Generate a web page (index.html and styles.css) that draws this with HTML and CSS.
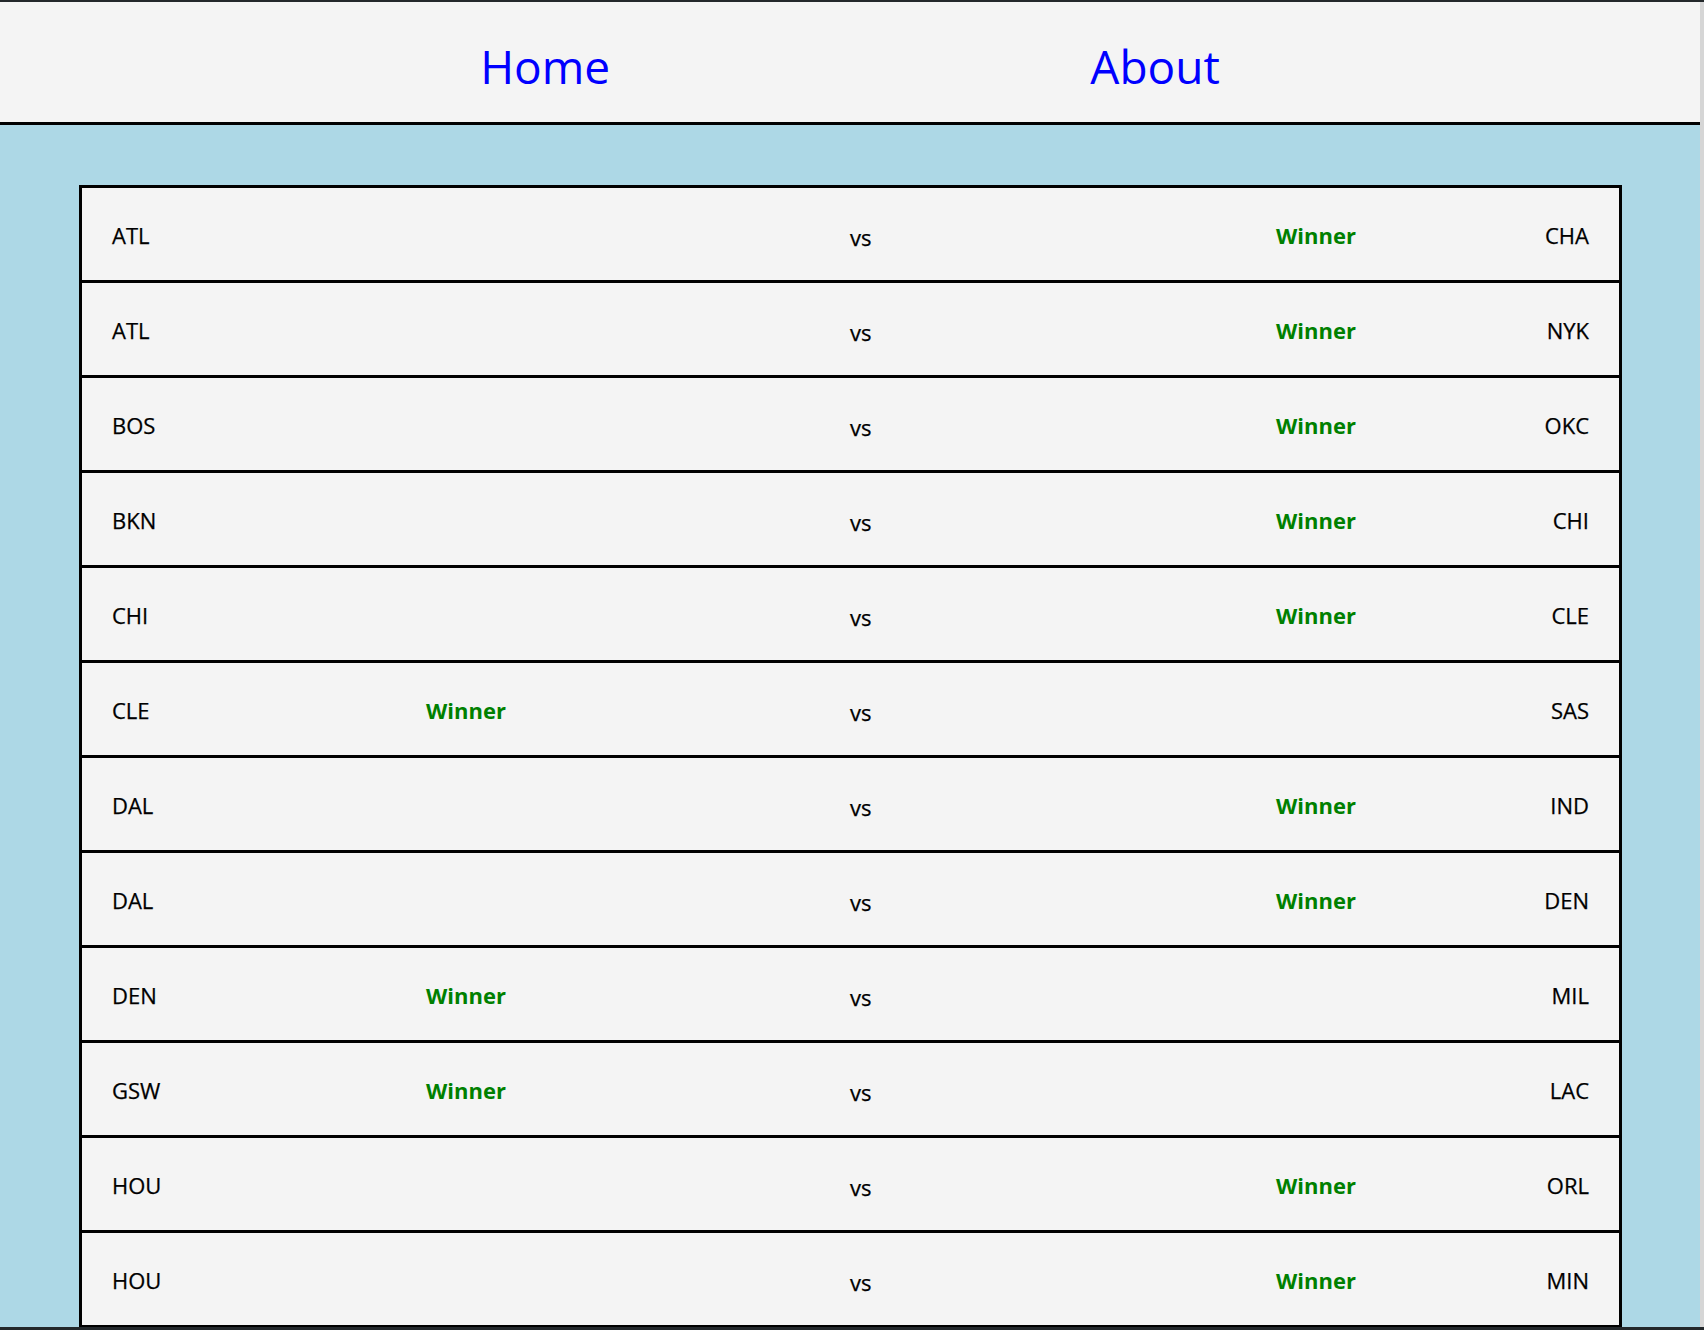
FILE: index.html
```html
<!DOCTYPE html>
<html lang="en">
<head>
<meta charset="utf-8">
<title>Matchups</title>
<link rel="stylesheet" href="styles.css">
</head>
<body>
<div class="window">
  <header class="header">
    <nav class="nav">
      <a class="nav-link" href="#">Home</a>
      <a class="nav-link" href="#">About</a>
    </nav>
  </header>
  <main class="main">
    <div class="games">
      <div class="game"><span class="team">ATL</span><span class="win"></span><span class="vs">vs</span><span class="win">Winner</span><span class="team team-right">CHA</span></div>
      <div class="game"><span class="team">ATL</span><span class="win"></span><span class="vs">vs</span><span class="win">Winner</span><span class="team team-right">NYK</span></div>
      <div class="game"><span class="team">BOS</span><span class="win"></span><span class="vs">vs</span><span class="win">Winner</span><span class="team team-right">OKC</span></div>
      <div class="game"><span class="team">BKN</span><span class="win"></span><span class="vs">vs</span><span class="win">Winner</span><span class="team team-right">CHI</span></div>
      <div class="game"><span class="team">CHI</span><span class="win"></span><span class="vs">vs</span><span class="win">Winner</span><span class="team team-right">CLE</span></div>
      <div class="game"><span class="team">CLE</span><span class="win">Winner</span><span class="vs">vs</span><span class="win"></span><span class="team team-right">SAS</span></div>
      <div class="game"><span class="team">DAL</span><span class="win"></span><span class="vs">vs</span><span class="win">Winner</span><span class="team team-right">IND</span></div>
      <div class="game"><span class="team">DAL</span><span class="win"></span><span class="vs">vs</span><span class="win">Winner</span><span class="team team-right">DEN</span></div>
      <div class="game"><span class="team">DEN</span><span class="win">Winner</span><span class="vs">vs</span><span class="win"></span><span class="team team-right">MIL</span></div>
      <div class="game"><span class="team">GSW</span><span class="win">Winner</span><span class="vs">vs</span><span class="win"></span><span class="team team-right">LAC</span></div>
      <div class="game"><span class="team">HOU</span><span class="win"></span><span class="vs">vs</span><span class="win">Winner</span><span class="team team-right">ORL</span></div>
      <div class="game"><span class="team">HOU</span><span class="win"></span><span class="vs">vs</span><span class="win">Winner</span><span class="team team-right">MIN</span></div>
    </div>
  </main>
</div>
</body>
</html>
```
FILE: styles.css
```css
html, body {
  margin: 0;
  padding: 0;
}

body {
  background: #23282b;
  height: 1330px;
  overflow: hidden;
  font-family: "Open Sans", "Noto Sans", sans-serif;
}

.window {
  margin-top: 2px;
  width: 1700px;
  height: 1325px;
  background: #add8e6;
  border-right: 4px solid #d6d6d6;
  overflow: hidden;
}

.header {
  height: 120px;
  background: #f4f4f4;
  border-bottom: 3px solid #000;
}

.nav {
  height: 100%;
  display: flex;
  justify-content: space-evenly;
  align-items: center;
}

.nav-link {
  color: #0000ff;
  text-decoration: none;
  font-size: 46px;
  font-weight: 400;
  line-height: 1;
  padding-top: 8px;
}

.main {
  padding: 60px 0 0 79px;
}

.games {
  width: 1537px;
  border: 3px solid #000;
  border-bottom: none;
}

.game {
  display: grid;
  grid-template-columns: 314px 424px 426px 1fr auto;
  align-items: center;
  height: 92px;
  padding: 0 30px;
  background: #f4f4f4;
  border-bottom: 3px solid #000;
  font-size: 22px;
  color: #000;
}

.team {
  padding-top: 2px;
  -webkit-text-stroke: 0.25px #000;
}

.team-right {
  text-align: right;
}

.win {
  color: #008000;
  font-weight: 700;
  padding-top: 2px;
}

.vs {
  padding-top: 5px;
  -webkit-text-stroke: 0.25px #000;
}
```
